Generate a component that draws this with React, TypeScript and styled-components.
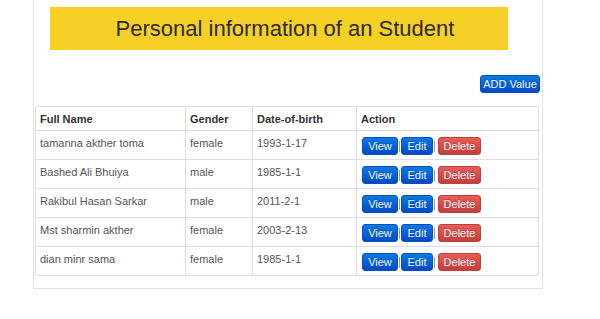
import React from "react";
import styled, { createGlobalStyle } from "styled-components";

const Global = createGlobalStyle`
  html, body { margin: 0; padding: 0; background: #fff; }
  body { font-family: "Liberation Sans", Arial, sans-serif; }
`;

const Panel = styled.div`
  margin-left: 33px;
  width: 506px;
  border: 1px solid #e2e2e2;
  border-top: none;
  padding: 7px 1px 12px 1px;
  display: flex;
  flex-direction: column;
`;

const Banner = styled.div`
  margin-left: 15px;
  width: 458px;
  height: 43px;
  background: #f6d024;
  display: flex;
  align-items: center;
  justify-content: center;
  padding-left: 12px;
  box-sizing: border-box;
`;

const Title = styled.h1`
  margin: 0;
  font-family: "Liberation Sans", Arial, sans-serif;
  font-weight: normal;
  font-size: 22px;
  color: #2b2b2b;
`;

const Toolbar = styled.div`
  display: flex;
  justify-content: flex-end;
  margin-top: 25px;
  margin-bottom: 13px;
  padding-right: 1px;
`;

const Btn = styled.button<{ $variant: "primary" | "danger"; $w: number }>`
  width: ${(p) => p.$w}px;
  height: 18px;
  padding: 0;
  border-radius: 3px;
  font-family: "Liberation Sans", Arial, sans-serif;
  font-size: 11px;
  line-height: 16px;
  color: #f4f8ff;
  text-shadow: 0 -1px 0 rgba(0, 0, 0, 0.2);
  cursor: pointer;
  border: 1px solid
    ${(p) => (p.$variant === "primary" ? "#0a4fbf" : "#b8433e")};
  background: ${(p) =>
    p.$variant === "primary"
      ? "linear-gradient(to bottom, #0a7be0, #0449c7)"
      : "linear-gradient(to bottom, #ea5c57, #c2403a)"};
`;

const Table = styled.table`
  width: 504px;
  border-collapse: separate;
  border-spacing: 0;
  border: 1px solid #dddddd;
  border-left: 0;
  border-radius: 4px;
  font-size: 11px;
  color: #333;
  table-layout: fixed;
`;

const Th = styled.th<{ $w?: number }>`
  ${(p) => (p.$w ? `width: ${p.$w}px;` : "")}
  text-align: left;
  font-weight: bold;
  padding: 6px 5px 5px 4px;
  line-height: 12px;
  border-left: 1px solid #dddddd;
  color: #333;
`;

const Td = styled.td`
  padding: 6px 5px 4px 4px;
  line-height: 12px;
  vertical-align: top;
  border-left: 1px solid #dddddd;
  border-top: 1px solid #dddddd;
  color: #555;
`;

const Actions = styled.div`
  display: flex;
  align-items: center;
  padding-left: 1px;
`;

const Sep = styled.span<{ $ml: number; $mr: number }>`
  display: inline-block;
  width: 1px;
  height: 11px;
  background: #9a9a9a;
  margin-left: ${(p) => p.$ml}px;
  margin-right: ${(p) => p.$mr}px;
`;

const students = [
  { name: "tamanna akther toma", gender: "female", dob: "1993-1-17" },
  { name: "Bashed Ali Bhuiya", gender: "male", dob: "1985-1-1" },
  { name: "Rakibul Hasan Sarkar", gender: "male", dob: "2011-2-1" },
  { name: "Mst sharmin akther", gender: "female", dob: "2003-2-13" },
  { name: "dian minr sama", gender: "female", dob: "1985-1-1" },
];

export default function App() {
  return (
    <>
      <Global />
      <Panel>
        <Banner>
          <Title>Personal information of an Student</Title>
        </Banner>
        <Toolbar>
          <Btn $variant="primary" $w={60}>ADD Value</Btn>
        </Toolbar>
        <Table>
          <thead>
            <tr>
              <Th $w={140}>Full Name</Th>
              <Th $w={57}>Gender</Th>
              <Th $w={94}>Date-of-birth</Th>
              <Th>Action</Th>
            </tr>
          </thead>
          <tbody>
            {students.map((s) => (
              <tr key={s.name}>
                <Td>{s.name}</Td>
                <Td>{s.gender}</Td>
                <Td>{s.dob}</Td>
                <Td>
                  <Actions>
                    <Btn $variant="primary" $w={36}>View</Btn>
                    <Sep $ml={1} $mr={1} />
                    <Btn $variant="primary" $w={32}>Edit</Btn>
                    <Sep $ml={1} $mr={3} />
                    <Btn $variant="danger" $w={43}>Delete</Btn>
                  </Actions>
                </Td>
              </tr>
            ))}
          </tbody>
        </Table>
      </Panel>
    </>
  );
}
